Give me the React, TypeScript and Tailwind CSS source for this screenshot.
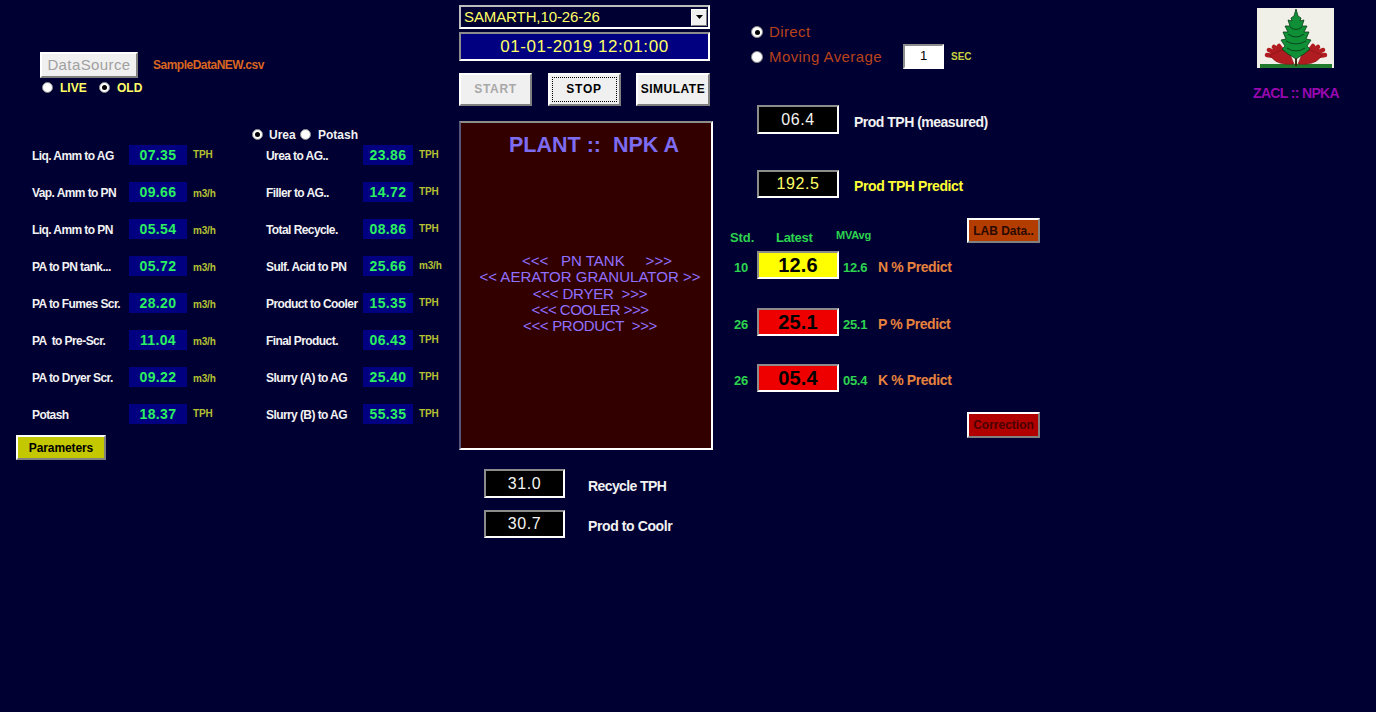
import React from "react";

const font = "font-['Liberation_Sans',Arial,sans-serif]";

function Radio({ on, className = "" }: { on?: boolean; className?: string }) {
  return (
    <span className={`flex h-[11px] w-[11px] shrink-0 items-center justify-center rounded-full border border-[#8a8a8a] bg-white ${className}`}>
      {on && <span className="h-[5px] w-[5px] rounded-full bg-black" />}
    </span>
  );
}

function Raised({ children, className = "" }: { children: React.ReactNode; className?: string }) {
  return (
    <button className={`flex items-center justify-center border-2 border-t-white border-l-white border-r-[#808080] border-b-[#808080] ${className}`}>
      {children}
    </button>
  );
}

function Readout({ value, className = "" }: { value: string; className?: string }) {
  return (
    <div className={`flex items-center justify-center border-2 border-t-[#8c8c8c] border-l-[#8c8c8c] border-r-white border-b-white ${className}`}>
      {value}
    </div>
  );
}

const rows = [
  ["Liq. Amm to AG", "07.35", "TPH", "Urea to AG..", "23.86", "TPH"],
  ["Vap. Amm to PN", "09.66", "m3/h", "Filler to AG..", "14.72", "TPH"],
  ["Liq. Amm to PN", "05.54", "m3/h", "Total Recycle.", "08.86", "TPH"],
  ["PA to PN tank...", "05.72", "m3/h", "Sulf. Acid to PN", "25.66", "m3/h"],
  ["PA to Fumes Scr.", "28.20", "m3/h", "Product to Cooler", "15.35", "TPH"],
  ["PA  to Pre-Scr.", "11.04", "m3/h", "Final Product.", "06.43", "TPH"],
  ["PA to Dryer Scr.", "09.22", "m3/h", "Slurry (A) to AG", "25.40", "TPH"],
  ["Potash", "18.37", "TPH", "Slurry (B) to AG", "55.35", "TPH"],
];

function Cell({ label, value, unit, boxW, labelW, unitDrop }: { label: string; value: string; unit: string; boxW: string; labelW: string; unitDrop?: boolean }) {
  return (
    <div className="flex items-center">
      <span className={`${labelW} mt-[1px] whitespace-pre text-[12px] leading-none font-bold tracking-[-0.58px] text-[#f2f2f2]`}>{label}</span>
      <span className={`${boxW} flex h-[20px] items-center justify-center bg-[#000080] pb-[1px] text-[14px] leading-none font-bold tracking-[0.35px] text-[#2cf060]`}>{value}</span>
      <span className={`ml-[6px] w-[30px] text-[10px] leading-none font-bold tracking-[-0.2px] text-[#b4c032] ${unitDrop ? "mt-[3px]" : ""}`}>{unit}</span>
    </div>
  );
}

function ChemRow({ std, latest, avg, label, bg, mt }: { std: string; latest: string; avg: string; label: string; bg: string; mt: string }) {
  return (
    <div className={`flex h-[28px] items-center ${mt}`}>
      <span className="mt-[5px] w-[27px] pr-[5px] text-center text-[13px] font-bold tracking-[-0.2px] text-[#2dd34f]">{std}</span>
      <Readout value={latest} className={`h-[28px] w-[82px] pb-[1px] text-[20px] font-bold tracking-[0.2px] text-black ${bg}`} />
      <span className="mt-[5px] ml-[4px] w-[36px] text-[13px] font-bold tracking-[-0.3px] text-[#2dd34f]">{avg}</span>
      <span className="mt-[4px] ml-[-1px] text-[14px] font-bold tracking-[-0.4px] text-[#e6823c]">{label}</span>
    </div>
  );
}

export default function App() {
  return (
    <div className={`${font} flex h-[712px] w-full overflow-hidden bg-[#000033]`}>
      {/* left column */}
      <div className="flex w-[459px] shrink-0 flex-col pt-[52px]">
        <div className="flex items-center pl-[40px]">
          <Raised className="h-[26px] w-[98px] bg-[#f0f0f0] text-[15px] tracking-[0.4px] text-[#a0a0a0]">DataSource</Raised>
          <span className="ml-[15px] text-[12px] font-bold tracking-[-0.5px] text-[#d9661f]">SampleDataNEW.csv</span>
        </div>
        <div className="mt-[3px] flex h-[13px] items-center pl-[42px] text-[12px] font-bold text-[#ffff66]">
          <Radio />
          <span className="ml-[7px] w-[39px]">LIVE</span>
          <Radio on />
          <span className="ml-[7px]">OLD</span>
        </div>
        <div className="mt-[34px] flex h-[13px] items-center pl-[252px] text-[12px] font-bold text-[#f2f2f2]">
          <Radio on />
          <span className="ml-[6px] w-[31px]">Urea</span>
          <Radio />
          <span className="ml-[7px]">Potash</span>
        </div>
        <div className="mt-[4px] flex flex-col gap-[17px] pl-[32px]">
          {rows.map((r) => (
            <div key={r[0]} className="flex items-center">
              <div className="w-[234px]">
                <Cell label={r[0]} value={r[1]} unit={r[2]} labelW="w-[97px]" boxW="w-[58px]" unitDrop={r[2] === "m3/h"} />
              </div>
              <Cell label={r[3]} value={r[4]} unit={r[5]} labelW="w-[97px]" boxW="w-[50px]" />
            </div>
          ))}
        </div>
        <Raised className="mt-[11px] ml-[16px] h-[25px] w-[90px] bg-[#c4c800] text-[12px] font-bold tracking-[-0.1px] text-black">Parameters</Raised>
      </div>

      {/* centre column */}
      <div className="flex w-[254px] shrink-0 flex-col pt-[5px]">
        <div className="flex h-[24px] w-[251px] items-center justify-between border-2 border-t-[#bdbdbd] border-l-[#bdbdbd] border-r-white border-b-white bg-[#000033] pr-[1px] pl-[3px] text-[15px] tracking-[-0.1px] text-[#ffff66]">
          <span>SAMARTH,10-26-26</span>
          <span className="flex h-[17px] w-[16px] items-center justify-center border border-t-white border-l-white border-r-[#808080] border-b-[#808080] bg-[#f0f0f0]">
            <svg width="7" height="4" viewBox="0 0 7 4"><path d="M0 0h7L3.5 4z" fill="#000" /></svg>
          </span>
        </div>
        <Readout value="01-01-2019 12:01:00" className="mt-[3px] h-[29px] w-[251px] bg-[#000080] text-[17px] tracking-[0.55px] text-[#ffff66]" />
        <div className="mt-[12px] flex w-[251px] justify-between">
          <Raised className="h-[33px] w-[73px] bg-[#f0f0f0] pb-[1px] text-[12px] font-bold tracking-[0.7px] text-[#a8a8a8]">START</Raised>
          <Raised className="h-[33px] w-[73px] bg-[#f0f0f0] text-[12px] font-bold tracking-[0.7px] text-black">
            <span className="flex h-[25px] w-[65px] items-center justify-center border border-dotted border-black pb-[1px]">STOP</span>
          </Raised>
          <Raised className="h-[33px] w-[74px] bg-[#f0f0f0] pb-[1px] text-[12px] font-bold tracking-[0.5px] text-black">SIMULATE</Raised>
        </div>
        <div className="mt-[15px] flex h-[329px] w-[254px] flex-col items-center border-2 border-t-[#8c8c8c] border-l-[#55557a] border-r-white border-b-white bg-[#330000] text-[#9070ff]">
          <div className="mt-[9px] pl-[16px] text-[21.5px] leading-[26px] font-bold whitespace-pre text-[#7d6cf0]">PLANT ::  NPK A</div>
          <div className="mt-[95px] flex flex-col items-center pl-[8px] text-[15px] leading-[16.3px] tracking-[0.02px] whitespace-pre">
            <span className="pl-[14px]">{"<<<   PN TANK     >>>"}</span>
            <span>{"<< AERATOR GRANULATOR >>"}</span>
            <span className="tracking-[-0.2px]">{"<<< DRYER  >>>"}</span>
            <span className="tracking-[-0.5px]">{"<<< COOLER >>>"}</span>
            <span className="tracking-[-0.3px]">{"<<< PRODUCT  >>>"}</span>
          </div>
        </div>
        <div className="mt-[19px] flex items-center pl-[25px]">
          <Readout value="31.0" className="h-[29px] w-[81px] bg-black text-[16px] tracking-[0.6px] text-[#f4f4f4]" />
          <span className="mt-[5px] ml-[23px] text-[14px] font-bold tracking-[-0.6px] text-[#f2f2f2]">Recycle TPH</span>
        </div>
        <div className="mt-[12px] flex items-center pl-[25px]">
          <Readout value="30.7" className="h-[28px] w-[81px] bg-black text-[16px] tracking-[0.6px] text-[#f4f4f4]" />
          <span className="mt-[5px] ml-[23px] text-[14px] font-bold tracking-[-0.4px] text-[#f2f2f2]">Prod to Coolr</span>
        </div>
      </div>

      {/* right column */}
      <div className="flex w-[327px] shrink-0 flex-col pt-[24px] pl-[17px]">
        <div className="flex h-[16px] items-center pl-[21px] text-[15px] tracking-[0.4px] text-[#b8421a]">
          <Radio on className="h-[12px] w-[12px]" />
          <span className="ml-[6px]">Direct</span>
        </div>
        <div className="mt-[4px] flex h-[25px] items-center pl-[21px] text-[15px] tracking-[0.4px] text-[#b8421a]">
          <Radio className="h-[12px] w-[12px]" />
          <span className="mt-[1px] ml-[6px] w-[134px] whitespace-nowrap">Moving Average</span>
          <div className="flex h-[25px] w-[41px] items-center justify-center border-2 border-t-[#8c8c8c] border-l-[#8c8c8c] border-r-white border-b-white bg-white pb-[2px] text-[13px] font-normal tracking-normal text-black">1</div>
          <span className="ml-[7px] text-[10px] font-bold tracking-normal text-[#c8d040]">SEC</span>
        </div>
        <div className="mt-[36px] flex items-center pl-[27px]">
          <Readout value="06.4" className="h-[29px] w-[82px] bg-black text-[16px] tracking-[0.6px] text-[#f4f4f4]" />
          <span className="mt-[5px] ml-[15px] text-[14px] font-bold tracking-[-0.5px] text-[#f2f2f2]">Prod TPH (measured)</span>
        </div>
        <div className="mt-[36px] flex items-center pl-[27px]">
          <Readout value="192.5" className="h-[28px] w-[82px] bg-black text-[16px] tracking-[0.6px] text-[#ffff66]" />
          <span className="mt-[5px] ml-[15px] text-[14px] font-bold tracking-[-0.4px] text-[#ffff33]">Prod TPH Predict</span>
        </div>
        <div className="mt-[20px] flex h-[25px] items-center">
          <span className="mt-[14px] w-[46px] text-[13px] font-bold tracking-[-0.1px] text-[#2dd34f]">Std.</span>
          <span className="mt-[14px] w-[60px] text-[13px] font-bold tracking-[-0.3px] text-[#2dd34f]">Latest</span>
          <span className="mt-[9px] w-[131px] text-[11px] font-bold tracking-[-0.2px] text-[#2dd34f]">MVAvg</span>
          <Raised className="h-[25px] w-[73px] bg-[#b33c00] text-[12px] font-bold text-[#2a0a00]">LAB Data..</Raised>
        </div>
        <ChemRow std="10" latest="12.6" avg="12.6" label="N % Predict" bg="bg-[#ffff00]" mt="mt-[8px]" />
        <ChemRow std="26" latest="25.1" avg="25.1" label="P % Predict" bg="bg-[#ee0000]" mt="mt-[29px]" />
        <ChemRow std="26" latest="05.4" avg="05.4" label="K % Predict" bg="bg-[#ee0000]" mt="mt-[28px]" />
        <div className="mt-[20px] pl-[237px]">
          <Raised className="h-[26px] w-[73px] bg-[#b00000] text-[12px] font-bold text-[#4a0000]">Correction</Raised>
        </div>
      </div>

      {/* logo column */}
      <div className="flex flex-1 flex-col pt-[8px] pl-[217px]">
        <svg width="77" height="60" viewBox="0 0 77 60" className="shrink-0">
          <rect width="77" height="60" fill="#f0f0e8" />
          <rect x="3" y="56" width="72" height="4" fill="#1f7a2c" />
          <g stroke="#b01c20" strokeWidth="4.5" strokeLinecap="round" fill="none">
            <path d="M30 50 L10 47 M30 50 L12 42 M30 50 L17 39 M31 50 L22 38" />
            <path d="M48 50 L68 47 M48 50 L66 42 M48 50 L61 39 M47 50 L56 38" />
          </g>
          <path d="M37 56 C28 57 18 56 13 47 L25 42 L33 46 Z" fill="#b01c20" stroke="#7a1014" strokeWidth="0.5" />
          <path d="M41 56 C50 57 60 56 65 47 L53 42 L45 46 Z" fill="#b01c20" stroke="#7a1014" strokeWidth="0.5" />
          <path d="M39 58 V44" stroke="#3a2a10" strokeWidth="2" />
          <path d="M39 1 L41 8 L44 10 L43 13 L47 12 L45 18 L50 18 L47 24 L52 24 L49 31 L54 32 L50 38 L53 41 L47 46 L42 49 L39 51 L36 49 L31 46 L25 41 L28 38 L24 32 L29 31 L26 24 L31 24 L28 18 L33 18 L31 12 L35 13 L34 10 L37 8 Z" fill="#0f8f36" stroke="#0a3d18" strokeWidth="0.8" />
          <path d="M33 19 Q39 24 45 19 M31 26 Q39 32 47 26 M29 33 Q39 39 49 33 M30 40 Q39 46 48 40" fill="none" stroke="#0a3d18" strokeWidth="0.9" />
        </svg>
        <span className="mt-[15px] ml-[-4px] w-[90px] text-[14px] font-bold tracking-[-0.65px] whitespace-nowrap text-[#9a08b0]">ZACL :: NPKA</span>
      </div>
    </div>
  );
}
